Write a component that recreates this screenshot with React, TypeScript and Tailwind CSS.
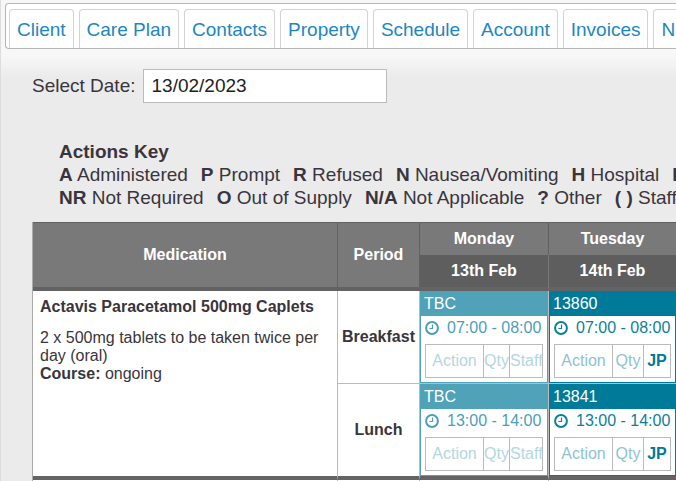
type Visit = {
  code: string;
  time: string;
  staff: string;
  confirmed: boolean;
};

const tabs = ["Client", "Care Plan", "Contacts", "Property", "Schedule", "Account", "Invoices", "Notes"];

const actionKey = [
  [
    ["A", "Administered"],
    ["P", "Prompt"],
    ["R", "Refused"],
    ["N", "Nausea/Vomiting"],
    ["H", "Hospital"],
    ["D", "Destroyed"],
  ],
  [
    ["NR", "Not Required"],
    ["O", "Out of Supply"],
    ["N/A", "Not Applicable"],
    ["?", "Other"],
    ["( )", "Staff"],
  ],
];

const days = [
  { name: "Monday", date: "13th Feb" },
  { name: "Tuesday", date: "14th Feb" },
];

const periods: { name: string; visits: Visit[] }[] = [
  {
    name: "Breakfast",
    visits: [
      { code: "TBC", time: "07:00 - 08:00", staff: "Staff", confirmed: false },
      { code: "13860", time: "07:00 - 08:00", staff: "JP", confirmed: true },
    ],
  },
  {
    name: "Lunch",
    visits: [
      { code: "TBC", time: "13:00 - 14:00", staff: "Staff", confirmed: false },
      { code: "13841", time: "13:00 - 14:00", staff: "JP", confirmed: true },
    ],
  },
];

const ClockIcon = () => (
  <svg className="size-[14px] shrink-0" viewBox="0 0 14 14" fill="none" stroke="currentColor" aria-hidden="true">
    <circle cx="7" cy="7" r="5.9" strokeWidth="2" />
    <path d="M7.5 3.6V7.5H4.4" strokeWidth="1.2" />
  </svg>
);

const VisitCard = ({ visit }: { visit: Visit }) => {
  const { code, time, staff, confirmed } = visit;

  return (
    <div className={`border-x border-b bg-white pb-1 ${confirmed ? "border-[#007a99]" : "border-[#4fa2b8]"}`}>
      <div className={`h-[25px] pl-[3px] leading-[25px] text-white ${confirmed ? "bg-[#007a99]" : "bg-[#4fa2b8]"}`}>
        {code}
      </div>
      <div className={`flex h-6 items-center gap-2 pl-1 whitespace-nowrap ${confirmed ? "text-[#0b7f9c]" : "text-[#4b9fb6]"}`}>
        <ClockIcon />
        {time}
      </div>
      <div
        className={`mx-1 mt-1 flex h-[34px] divide-x divide-[#bbb] border border-[#bbb] text-center leading-8 ${
          confirmed ? "text-[#8fc3d0]" : "text-[#b2d7e1]"
        }`}
      >
        <div className="w-[58px] shrink-0">Action</div>
        <div className={confirmed ? "w-[31px] shrink-0" : "w-[26px] shrink-0"}>Qty</div>
        <div className={confirmed ? "flex-1 font-bold text-[#007a99]" : "flex-1"}>{staff}</div>
      </div>
    </div>
  );
};

export default function App() {
  return (
    <div className="min-h-screen overflow-hidden border-l border-[#ddd] bg-[#ebebeb] font-['Liberation_Sans',Arial,sans-serif] text-[19px] text-[#3a353c]">
      {/* Tabs and date */}
      <div className="bg-linear-to-b from-[#f7f7f7] from-55% to-[#ebebeb] to-75% pt-[3px]">
        <nav className="ml-1 flex gap-[5px] overflow-hidden rounded-l border border-r-0 border-[#b5b5b5] bg-white pt-[5px] pl-[3px]">
          {tabs.map((tab) => (
            <a
              key={tab}
              href="#"
              className="h-[39px] shrink-0 rounded-t border border-b-0 border-[#d3d3d3] px-[7px] leading-[39px] whitespace-nowrap text-[#1c87c2]"
            >
              {tab}
            </a>
          ))}
        </nav>
        <div className="mt-5 flex items-center gap-[7px] pl-[31px]">
          <label htmlFor="date">Select Date:</label>
          <input
            id="date"
            type="text"
            defaultValue="13/02/2023"
            className="h-[34px] w-[244px] border border-[#bbb] bg-white px-2 text-[#222] outline-none"
          />
        </div>
      </div>

      {/* Actions key */}
      <div className="mt-[37px] pl-[58px] leading-[23px] whitespace-nowrap">
        <h2 className="font-bold">Actions Key</h2>
        {actionKey.map((line, i) => (
          <p key={i} className="flex gap-[13px]">
            {line.map(([code, meaning]) => (
              <span key={code}>
                <b>{code}</b> {meaning}
              </span>
            ))}
          </p>
        ))}
      </div>

      {/* Medication chart */}
      <table className="mt-[13px] ml-[31px] w-[645px] table-fixed border-separate border-spacing-0 border-l border-[#aaa] text-base leading-[18px]">
        <colgroup>
          <col className="w-[305px]" />
          <col className="w-[82px]" />
          <col className="w-[129px]" />
          <col />
        </colgroup>
        <thead className="bg-[#797979] text-white">
          <tr className="h-[33px]">
            <th rowSpan={2} className="border-t border-r border-b-4 border-[#626262]">
              Medication
            </th>
            <th rowSpan={2} className="border-t border-r border-b-4 border-[#626262]">
              Period
            </th>
            {days.map((day) => (
              <th key={day.name} className="border-t border-r border-[#626262]">
                {day.name}
              </th>
            ))}
          </tr>
          <tr className="h-9">
            {days.map((day) => (
              <th key={day.date} className="border-r border-b-4 border-r-[#777] border-b-[#646464] bg-[#5e5e5e]">
                {day.date}
              </th>
            ))}
          </tr>
        </thead>
        <tbody className="bg-white">
          {periods.map((period, i) => {
            const last = i === periods.length - 1;
            const edge = last ? "border-r border-b-4 border-r-[#bbb] border-b-[#646464]" : "border-r border-b border-[#bbb]";

            return (
              <tr key={period.name}>
                {i === 0 && (
                  <td
                    rowSpan={periods.length}
                    className="border-r border-b-4 border-r-[#bbb] border-b-[#646464] px-[7px] pt-[7px] align-top"
                  >
                    <p className="font-bold">Actavis Paracetamol 500mg Caplets</p>
                    <p className="mt-[13px]">2 x 500mg tablets to be taken twice per day (oral)</p>
                    <p>
                      <b>Course:</b> ongoing
                    </p>
                  </td>
                )}
                <th className={edge}>{period.name}</th>
                {period.visits.map((visit, j) => (
                  <td key={j} className={`${edge} p-0`}>
                    <VisitCard visit={visit} />
                  </td>
                ))}
              </tr>
            );
          })}
          <tr className="h-2">
            <td className="border-r border-[#bbb] p-0" />
            <td className="border-r border-[#bbb] p-0" />
            <td className="border-r border-[#bbb] p-0" />
            <td className="border-r border-[#bbb] p-0" />
          </tr>
        </tbody>
      </table>
    </div>
  );
}
